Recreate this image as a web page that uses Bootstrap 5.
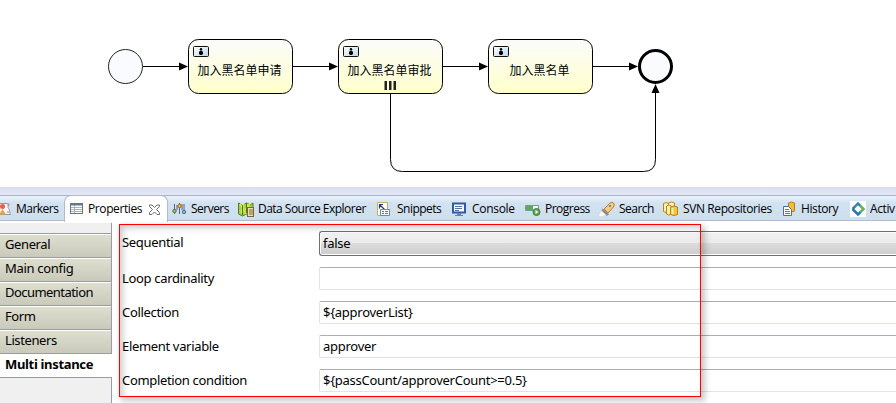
<!DOCTYPE html>
<html lang="en">
<head>
<meta charset="utf-8">
<meta name="viewport" content="width=device-width, initial-scale=1">
<title>Process editor</title>
<link href="https://cdn.jsdelivr.net/npm/bootstrap@5.3.0/dist/css/bootstrap.min.css" rel="stylesheet">
<style>
body{width:896px;height:403px;font:12px/16px "Noto Sans","Open Sans",sans-serif;color:#000;background:#fff}
.canvas{height:187px}
.canvas text{font:400 12px "Noto Sans CJK SC",sans-serif}
.sash{height:8px;background:linear-gradient(#d9def0,#e2e8f5)}
.views{height:26px;border-top:1px solid #a9afc9;border-bottom:1px solid #b4b8d0;background:linear-gradient(#eaf3fb 0,#d3e2f1 7px,#cddeed)}
.view{height:25px;white-space:nowrap;flex:none}
.view svg{width:16px;height:16px;flex:none;margin-right:4px}
.view span{font-family:"Open Sans",sans-serif;letter-spacing:-.4px}
.view .tight{letter-spacing:-.52px}
.view .wide{letter-spacing:-.3px}
.v-markers{width:64px}.v-servers{width:67px}.v-data{width:139px}.v-snippets{width:75px}.v-console{width:73px}.v-progress{width:75px}.v-search{width:64px}.v-svn{width:120px}.v-history{width:65px}
.v-servers,.v-data,.v-snippets,.v-console,.v-progress{padding-left:3px}
.v-search,.v-svn{padding-left:2px}
.view.v-markers svg{margin:0 5px 0 -5px}
.view.current{width:104px;height:27px;margin:-1px 0 -1px;padding:0 0 0 4px;background:#fff;border:1px solid #b4b8d0;border-bottom:0;border-radius:7px 7px 0 0;align-self:flex-start}
.current svg:first-child{margin-right:3px}
.view.current .shut{width:13px;height:13px;margin:0 0 0 6px}
.sections{width:112px;height:180px;margin-top:2px;background:#f0f0f0}
.gap-top{height:10px;border-right:1px solid #989ca5}
.section{height:24px;padding:2px 0 0 5px;border-top:1px solid #989ca5;border-right:1px solid #989ca5;box-shadow:inset 0 1px #fff;background:linear-gradient(#dedfcf,#c9cabb);font-size:13px;line-height:17px;letter-spacing:-.4px;white-space:nowrap}
.section.long{letter-spacing:-.55px}
.section.wider{letter-spacing:-.3px}
.section.chosen{height:25px;background:#fff;border-bottom:1px solid #989ca5;border-right:0;font-weight:700;letter-spacing:-.33px}
.rest{border-right:1px solid #989ca5}
.fields{padding:10px 0 0 10px;min-width:0}
.field{height:23px;margin-bottom:11px;font-size:13px;line-height:20px;letter-spacing:-.27px}
.field label{width:197px;flex:none;white-space:nowrap;letter-spacing:-.33px;padding-bottom:1px}
.entry{border:1px solid #e2e3ea;border-top-color:#abadb3;border-right:0;border-radius:2px 0 0 2px;padding:0 3px;height:23px;line-height:21px}
.field.pick{height:25px}
.pick label{line-height:23px}
.pick .entry{height:25px;line-height:23px;border-color:#707070;box-shadow:inset 1px 1px #fcfcfc,inset 0 -1px #fcfcfc;background:linear-gradient(#f2f2f2,#ebebeb 48%,#dcdcdc 50%,#cdcdcd);border-radius:3px 0 0 3px}
.frame{left:119px;top:224px;width:582px;height:173px;border:1px solid #f00;box-shadow:3px 3px 6px 1px rgba(0,0,0,.22),inset 3px 3px 6px rgba(0,0,0,.2)}
</style>
<script src="https://cdn.jsdelivr.net/npm/bootstrap@5.3.0/dist/js/bootstrap.bundle.min.js"></script>
</head>
<body class="overflow-hidden position-relative d-flex flex-column">
<svg class="canvas d-block flex-shrink-0" width="896" height="187">
<defs>
<linearGradient id="fill" x2="0" y2="1"><stop stop-color="#fbfcfb"/><stop offset="1" stop-color="#ffffcb"/></linearGradient>
<linearGradient id="badge" x2="1" y2="1"><stop stop-color="#fff"/><stop offset="1" stop-color="#b9d8ec"/></linearGradient>
<g id="task"><rect x=".5" y=".5" width="104" height="54" rx="10" fill="url(#fill)" stroke="#000"/>
<rect x="5.500" y="7.500" width="15" height="10" rx="1" fill="url(#badge)" stroke="#111"/>
<circle cx="13" cy="10.200" r="1.200"/><path d="M11 13l1-1.300h2l1 1.300v1.800l-1 1.200h-2l-1-1.200z"/></g>
<path id="arrow" d="M0 0l-9-4v8z"/>
</defs>
<g fill="none" stroke="#000"><path d="M143 66.500h42M293 66.500h42M443 66.500h42M593 66.500h42M390.500 94v65.500q0 12 12 12h241q12 0 12-12v-70"/><circle cx="125.500" cy="66.500" r="17" fill="#fafbfe" stroke="#222"/><circle cx="655.500" cy="66.500" r="16" fill="#fafbfe" stroke-width="3"/></g>
<use href="#task" x="188" y="39"/><use href="#task" x="338" y="39"/><use href="#task" x="488" y="39"/>
<use href="#arrow" x="188" y="66.500"/><use href="#arrow" x="338" y="66.500"/><use href="#arrow" x="488" y="66.500"/><use href="#arrow" x="638" y="66.500"/>
<path d="M655.500 84l-4 9h8z"/><path fill="#222" d="M384.500 81h2.500v9h-2.500zM389 81h2.500v9H389zM393.500 81h2.500v9h-2.500z"/>
<text x="197.500" y="75">加入黑名单申请</text><text x="347.500" y="75">加入黑名单审批</text><text x="509.500" y="75">加入黑名单</text>
</svg>
<div class="sash flex-shrink-0"></div>
<nav class="views d-flex flex-shrink-0">
<div class="view v-markers d-flex align-items-center"><svg viewBox="0 0 16 16"><path d="M1.500 2.500h11c4 0-1 3 1 5s1 6 2 6h-14z" fill="#f8fafc" stroke="#8999b0"/><circle cx="7.500" cy="5.500" r="2.500" fill="#ec5b4d"/><path d="M7.500 8l3.500 5.500H4z" fill="#f0a33c"/><path d="M12 4h2M12 11h2" stroke="#d66"/></svg><span class="tight">Markers</span></div>
<div class="view current d-flex align-items-center"><svg viewBox="0 0 16 16"><rect x="1.500" y="2.500" width="12" height="10" fill="#fff" stroke="#66758b"/><path d="M1 3.500h13" stroke="#66758b" stroke-width="2"/><path d="M2 6.500h11M2 8.500h11M2 10.500h11M5.500 4v8" stroke="#8fa2bd" stroke-width=".8"/></svg><span>Properties</span><svg class="shut" viewBox="1.500 1.500 13 13"><path d="M3 3.500h2.500L8 6l2.500-2.500H13V5l-3 3 3 3v2h-2.500L8 10.500 5.500 13H3v-2l3-3-3-3z" fill="#fff" stroke="#6e6e6e"/></svg></div>
<div class="view v-servers d-flex align-items-center"><svg viewBox="0 0 16 16"><path d="M3.500 3v10M8.500 2v11M13 3v10M6 4v5M11 3v6" stroke="#4e648c"/><circle cx="3.500" cy="10" r="1.700" fill="#b5c845" stroke="#587036"/><circle cx="8.500" cy="5" r="1.700" fill="#ffc13c" stroke="#98641b"/><circle cx="13" cy="11" r="1.700" fill="#91bbd4" stroke="#476d96"/></svg><span class="tight">Servers</span></div>
<div class="view v-data d-flex align-items-center"><svg viewBox="0 0 16 16"><path d="M.5 2l4 2.500L8.500 2l3.500 2 3-2v11l-3 1.500-3.500-1.500-4 2-4-2z" fill="#9ed34b" stroke="#54783b"/><path d="M2 3l6 10M6 3l-3 9M9 3l3 5M12 3l-5 6" stroke="#dce93c" stroke-width="1.500"/><path d="M4.500 4v10M8.500 2v10" stroke="#44783d"/><rect x="9.500" y="6.500" width="6" height="9" fill="#efe0a8" stroke="#766843"/><path d="M11 9h4M11 11h4M11 13h4" stroke="#766843"/></svg><span class="tight">Data Source Explorer</span></div>
<div class="view v-snippets d-flex align-items-center"><svg viewBox="1 0 16 16"><path d="M1.500 1.500h10v13h-10z" fill="#fff" stroke="#c4ad69"/><path d="M3.500 3.500v4M3 3.500h4M3.500 3.500l5 5" stroke="#263d71" stroke-width="1.200"/><path d="M4.500 8.500h9v6h-9z" fill="#f8fbff" stroke="#638cb2"/><path d="M6 10.500h2M6 12.500h2" stroke="#e03b34"/><path d="M9 10.500h3M9 12.500h3" stroke="#36a168"/></svg><span class="tight">Snippets</span></div>
<div class="view v-console d-flex align-items-center"><svg viewBox="1 0 16 16"><path d="M2 2.500h12v9H2z" fill="#f7fbff" stroke="#335a9c" stroke-width="2"/><path d="M4 5.500h7M4 7.500h7M4 9.500h4" stroke="#5471a9"/><path d="M6 12h4v2h2v1H4v-1h2z" fill="#6685b3"/></svg><span class="wide">Console</span></div>
<div class="view v-progress d-flex align-items-center"><svg viewBox="0 0 16 16"><path d="M.5 4.500h13v5H.5z" fill="#f4f8ef" stroke="#7a9791"/><path d="M1 5h7v4H1z" fill="#52ae59"/><circle cx="11.500" cy="11" r="3.500" fill="#5ba64b" stroke="#477b45"/><path d="M10.500 9l3 2-3 2z" fill="#fff"/></svg><span class="tight">Progress</span></div>
<div class="view v-search d-flex align-items-center"><svg viewBox="0 0 16 16"><path d="M5 8l6-6q2-1.500 3.500 0t0 4l-5.500 6z" fill="#f4cc7a" stroke="#bd7a32"/><path d="M3.500 8l6 5-1.500 1.500-5-4z" fill="#85829b" stroke="#8f8fa5"/><path d="M3 10l4 4-5 1.500L0 14z" fill="#fffbe0"/><circle cx="11" cy="5" r="1" fill="#65708e"/></svg><span class="tight">Search</span></div>
<div class="view v-svn d-flex align-items-center"><svg viewBox="0 0 16 16"><g fill="#fff1b2" stroke="#bd811c"><path d="M.5 2.500q2.500-2 5 0v8q-2.500 2-5 0zM5.500 2q3-2 6 0v8h-6z"/><path d="M3.500 5q2-2 5 0v8q-3 2-5 0z"/><path d="M7.500 6q3.500-2 7 0v7.500q-3.500 2-7 0z" fill="#f4c541"/></g><path d="M9.500 7v6" stroke="#fff3a2" stroke-width="2"/></svg><span>SVN Repositories</span></div>
<div class="view v-history d-flex align-items-center"><svg viewBox="0 0 16 16"><path d="M7.500 2q3-2 6 0v8q-3 2-6 0z" fill="#f5bd32" stroke="#b47925"/><path d="M2.500 5.500h5l3 3v6h-8z" fill="#fff" stroke="#496ea7"/><path d="M4 8.500h4M4 10.500h5M4 12.500h5" stroke="#537ab4"/></svg><span>History</span></div>
<div class="view d-flex align-items-center"><svg class="ms-1" viewBox="0 0 16 16"><path d="M0 0h16v16H0z" fill="#fff"/><path d="M2.500 8L8 2.500 10.500 5" fill="none" stroke="#3e83ac" stroke-width="2.500"/><path d="M2.500 8L8 13.500l2.500-2.500" fill="none" stroke="#2675bd" stroke-width="2.500"/><path d="M10.500 5l3 3-3 3" fill="none" stroke="#64b45a" stroke-width="2.500"/></svg><span>Activ</span></div>
</nav>
<main class="d-flex flex-grow-1">
<aside class="sections flex-shrink-0 d-flex flex-column">
<div class="gap-top"></div>
<div class="section">General</div><div class="section wider">Main config</div><div class="section long">Documentation</div><div class="section">Form</div><div class="section">Listeners</div><div class="section chosen">Multi instance</div>
<div class="rest flex-grow-1"></div>
</aside>
<form class="fields flex-grow-1">
<div class="field pick d-flex"><label>Sequential</label><div class="entry flex-grow-1">false</div></div>
<div class="field d-flex align-items-center"><label>Loop cardinality</label><div class="entry flex-grow-1"></div></div>
<div class="field d-flex align-items-center"><label>Collection</label><div class="entry flex-grow-1">${approverList}</div></div>
<div class="field d-flex align-items-center"><label>Element variable</label><div class="entry flex-grow-1">approver</div></div>
<div class="field d-flex align-items-center"><label>Completion condition</label><div class="entry flex-grow-1">${passCount/approverCount&gt;=0.5}</div></div>
</form>
</main>
<div class="frame position-absolute pe-none"></div>
</body>
</html>
